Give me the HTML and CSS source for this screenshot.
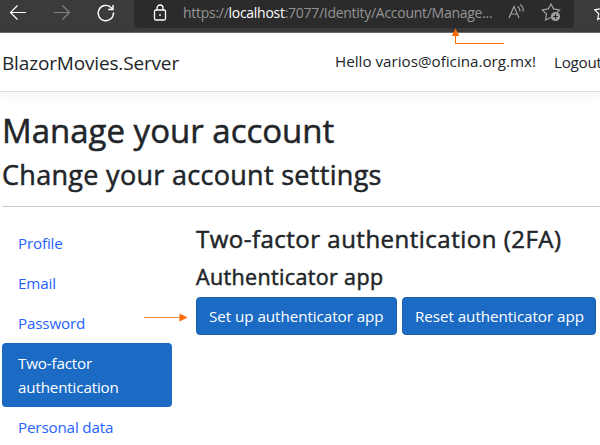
FILE: index.html
```html
<!DOCTYPE html>
<html lang="en">
<head>
<meta charset="utf-8">
<title>Two-factor authentication (2FA)</title>
<link rel="stylesheet" href="styles.css">
</head>
<body>
<div class="toolbar">
  <svg class="nav-icons" width="134" height="32" viewBox="0 0 134 32" fill="none" stroke-width="1.2">
    <path stroke="#fff" d="M26 12.5H10.5M17.5 5.5l-7 7 7 7"/>
    <path stroke="#858585" d="M54 12.5h15.5M62.5 5.5l7 7-7 7"/>
    <path stroke="#fff" stroke-width="1.4" d="M113.5 12.5a7.7 7.7 0 1 1-2.500-5.100l1.500 1.500M113 5v4.500h-4.800"/>
  </svg>
  <div class="address">
    <svg class="lock" width="14" height="18" viewBox="0 0 14 18" fill="none" stroke="#fff" stroke-width="1.3">
      <rect x="1.500" y="6" width="11" height="10" rx="1.500"/>
      <path d="M4 6V4a3 3 0 0 1 6 0v2"/>
      <rect x="6.200" y="10.200" width="1.600" height="1.600" fill="#fff" stroke="none"/>
    </svg>
    <span class="url">https://<b>localhost</b>:7077/Identity/Account/Manage...</span>
    <svg class="page-icons" width="56" height="22" viewBox="0 0 56 22" fill="none" stroke="#a0a0a0" stroke-width="1.2">
      <path d="M1 17L6 5.500 11 17M3 13h6M9.500 5.500q2.500 1.500 2.500 5M12 3.500q3.500 2 3.200 7"/>
      <path d="M43 16.500l-5.500 2.500 1-6-4.200-4.200 6-.9L43 3l2.600 4.900 6 .9-2.700 2.800"/>
      <circle cx="47.500" cy="15.500" r="4.600" fill="#a0a0a0" stroke="none"/>
      <path stroke="#2b2b2b" d="M45 15.500h5M47.500 13v5"/>
    </svg>
  </div>
  <svg class="favorites" width="6" height="22" viewBox="0 0 6 22" fill="none" stroke="#fff" stroke-width="1.2">
    <path d="M9 3L6.200 7.900.7 8.800l4 4-1 5.700L9 16"/>
  </svg>
</div>
<header class="site-header">
  <a class="brand">BlazorMovies.Server</a>
  <a class="hello">Hello varios@oficina.org.mx!</a>
  <a class="logout">Logout</a>
</header>
<main class="page">
  <h1>Manage your account</h1>
  <h2>Change your account settings</h2>
  <hr>
  <div class="columns">
    <nav class="side">
      <a>Profile</a>
      <a>Email</a>
      <a>Password</a>
      <a class="active">Two-factor<br>authentication</a>
      <a>Personal data</a>
    </nav>
    <section class="content">
      <h3>Two-factor authentication (2FA)</h3>
      <h4>Authenticator app</h4>
      <div class="buttons">
        <a class="btn setup">Set up authenticator app</a>
        <a class="btn reset">Reset authenticator app</a>
      </div>
    </section>
  </div>
</main>
<svg class="annotations" width="600" height="445" viewBox="0 0 600 445" fill="none" stroke="#ff6a00">
  <path d="M455.500 35v8.500H504"/>
  <path fill="#ff6a00" stroke="none" d="M455.500 28.500l3.800 7.500h-7.600z"/>
  <path stroke="#ff8b3d" d="M144 317.500h36"/>
  <path fill="#ff6a00" stroke="none" d="M187.500 317.500l-8-4v8z"/>
</svg>
</body>
</html>
```

FILE: styles.css
```css
* { box-sizing: border-box; }
html, body { height: 445px; overflow: hidden; }
body {
  margin: 0;
  background: #fff;
  color: #212529;
  font-family: "Open Sans", "Noto Sans", sans-serif;
  font-size: 15.2px;
  line-height: 24px;
  white-space: nowrap;
}
svg { display: block; flex: none; }
.toolbar {
  display: flex;
  height: 33px;
  background: #3b3b3b;
  border-bottom: 1px solid #6a6a6a;
}
.address {
  display: flex;
  flex: none;
  width: 440px;
  height: 28px;
  padding-left: 19px;
  background: #2b2b2b;
  border-radius: 0 0 4px 4px;
}
.lock { margin-top: 4px; }
.url {
  flex: none;
  width: 324px;
  margin-left: 16px;
  font-size: 14px;
  padding-top: 1px;
  letter-spacing: -.28px;
  color: #949494;
}
.url b { font-weight: 400; color: #fff; }
.page-icons { margin-top: 1px; margin-left: 1px; }
.favorites { margin: 1px 0 0 auto; }
.site-header {
  display: flex;
  height: 59px;
  border-bottom: 1px solid #dcdcdc;
  box-shadow: 0 4px 12px rgba(0, 0, 0, .05);
}
.brand, .hello, .logout { flex: none; }
.brand { width: 333px; padding: 18px 0 0 2px; font-size: 19px; letter-spacing: -.16px; }
.hello { width: 219px; padding: 16px 0 0 2px; }
.logout { padding: 17px 0 0 2px; letter-spacing: -.25px; }
.page { padding: 15px 0 0 2px; }
h1, h2, h3, h4 { margin: 0; font-weight: 400; -webkit-text-stroke: .5px #212529; }
h1 { font-size: 33px; line-height: 48px; }
h2 { font-size: 27px; line-height: 40px; letter-spacing: .3px; }
hr { margin: 11px 0 0; border: 0; border-top: 1px solid #c8c9ca; }
.columns { display: flex; padding-top: 16px; }
.side { width: 170px; margin-right: 24px; color: #2563ff; letter-spacing: -.16px; }
.side a { display: block; padding: 8px 16px; }
.side .active { background: #1b6ac4; color: #fff; border-radius: 4px; }
.content { flex: none; }
h3 { font-size: 24px; line-height: 32px; letter-spacing: .49px; }
h4 { margin-top: 8px; font-size: 21.5px; line-height: 28px; letter-spacing: .35px; }
.buttons { display: flex; gap: 5px; margin-top: 6px; }
.btn {
  height: 38px;
  padding: 6px 12px 0;
  background: #1b6ac4;
  border: 1px solid #1861ac;
  border-radius: 4px;
  color: #fff;
  letter-spacing: -.05px;
}
.setup { width: 201px; }
.reset { width: 194px; }
.annotations { position: absolute; left: 0; top: 0; }
```
